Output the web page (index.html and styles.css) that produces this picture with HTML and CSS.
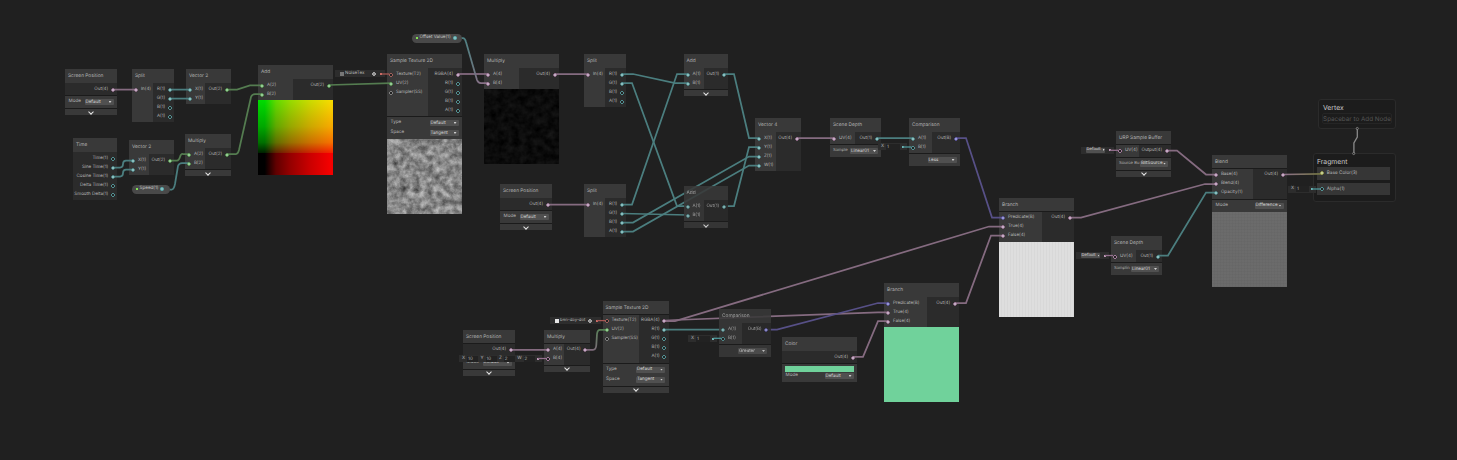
FILE: index.html
```html
<!DOCTYPE html>
<html lang="en">
<head>
<meta charset="utf-8">
<title>Shader Graph</title>
<link rel="stylesheet" href="styles.css">
</head>
<body>
<main class="graph">
<svg class="wires" width="1457" height="460" viewBox="0 0 1457 460">
  <defs>
    <linearGradient id="vec1to4" gradientUnits="userSpaceOnUse" x1="462" y1="38" x2="488" y2="83"><stop offset="0" stop-color="#4e8284"/><stop offset=".6" stop-color="#66777f"/><stop offset="1" stop-color="#8d7089"/></linearGradient>
    <linearGradient id="vec4to2" gradientUnits="userSpaceOnUse" x1="590" y1="350" x2="602" y2="330"><stop offset="0" stop-color="#806a7d"/><stop offset="1" stop-color="#568255"/></linearGradient>
    <linearGradient id="vec4to3" gradientUnits="userSpaceOnUse" x1="1284" y1="174" x2="1322" y2="174"><stop offset="0" stop-color="#8d7089"/><stop offset="1" stop-color="#71753f"/></linearGradient>
  </defs>
  <g class="v4">
    <path d="M113 89.6H136"/><path d="M458 74H488"/><path d="M555 74H588"/><path d="M548 204.7H588"/>
    <path d="M797 138H834"/><path d="M511 349.8H548"/>
    <path d="M1070 217.5H1081L1205 184H1216"/>
    <path d="M665 321H675L989 226.500H1003"/><path d="M665 320.500L675 320L878 312.300H888"/>
    <path d="M853 356.800H863L878 321.200H888"/><path d="M955 303H966L991 235.500H1003"/>
    <path d="M1167 150.500H1177L1206 174.500H1216"/>
  </g>
  <g class="v1">
    <path d="M170 89.600H190"/><path d="M170 98.600H190"/>
    <path d="M113 167.500H120Q123 167.500 123 164T126 160.500H133"/><path d="M113 176.500H120Q123 176.500 123 173T126 169.500H133"/>
    <path d="M165 189.500H172Q174 189 175 184L178 166Q179 163 182 163H189"/>
    <path d="M622 74H633L675 83H688"/><path d="M622 83H632L677 206H688"/>
    <path d="M622 204.500H632L677 74H688"/><path d="M622 213.500L688 215"/>
    <path d="M622 222.500H633L749 156.500H759"/><path d="M622 231.500H633L749 165.500H759"/>
    <path d="M724 74H734L749 138H759"/><path d="M724 206H734L749 147H759"/>
    <path d="M877 138H913"/><path d="M665 329.500H723"/>
    <path d="M1158 255.500H1168L1206 192.500H1216"/>
  </g>
  <g class="v2">
    <path d="M227 89.600H237L250 85.300H262"/><path d="M227 154H236Q238 154 239 150L251 97Q252 94 255 94H262"/>
    <path d="M170 160.500H177Q179 160.500 180 157T183 154H189"/><path d="M329 85L391 83.200"/>
  </g>
  <g class="bool"><path d="M956 138H966L992 217.500H1003"/><path d="M766 329.500H777L878 303H888"/></g>
  <path stroke="url(#vec1to4)" d="M455 38H463Q465 38 466 42L477 80Q478 83 481 83H488"/>
  <path stroke="url(#vec4to2)" d="M586 349.800H593Q596 349.800 596.300 345L597 334Q597.500 329.800 600 329.800H607"/>
  <path stroke="url(#vec4to3)" d="M1283 174.500L1322 173.800"/>
</svg>

<section class="node screen-a"><h2>Screen Position</h2><div class="ports"><div class="out"><p class="p4">Out(4)</p></div></div><div class="ctl"><label>Mode</label><span class="sel">Default</span></div><div class="more"></div></section>
<section class="node split-a"><h2>Split</h2><div class="ports"><div class="in"><p class="p4">In(4)</p></div><div class="out"><p class="p1">R(1)</p><p class="p1">G(1)</p><p class="p1 free">B(1)</p><p class="p1 free">A(1)</p></div></div></section>
<section class="node vec2-a"><h2>Vector 2</h2><div class="ports"><div class="in"><p class="p1">X(1)</p><p class="p1">Y(1)</p></div><div class="out"><p class="p2">Out(2)</p></div></div></section>
<section class="node time"><h2>Time</h2><div class="ports"><div class="out"><p class="p1 free">Time(1)</p><p class="p1">Sine Time(1)</p><p class="p1">Cosine Time(1)</p><p class="p1 free">Delta Time(1)</p><p class="p1 free">Smooth Delta(1)</p></div></div></section>
<section class="node vec2-b"><h2>Vector 2</h2><div class="ports"><div class="in"><p class="p1">X(1)</p><p class="p1">Y(1)</p></div><div class="out"><p class="p2">Out(2)</p></div></div></section>
<section class="node mul-a"><h2>Multiply</h2><div class="ports"><div class="in"><p class="p2">A(2)</p><p class="p2">B(2)</p></div><div class="out"><p class="p2">Out(2)</p></div></div><div class="more"></div></section>
<div class="pill speed"><span>Speed(1)</span></div>
<section class="node add-a"><h2>Add</h2><div class="ports"><div class="in"><p class="p2">A(2)</p><p class="p2">B(2)</p></div><div class="out"><p class="p2">Out(2)</p></div></div><div class="preview uv"></div></section>
<div class="chip noise-tex"><i class="swatch"></i><b class="grow">NoiseTex</b><i class="picker"></i><i class="dot red"></i></div>
<div class="pill offset"><span>Offset Value(1)</span></div>
<section class="node tex-a"><h2>Sample Texture 2D</h2><div class="ports"><div class="in"><p class="pt free">Texture(T2)</p><p class="p2">UV(2)</p><p class="ps free">Sampler(SS)</p></div><div class="out"><p class="p4">RGBA(4)</p><p class="p1 free">R(1)</p><p class="p1 free">G(1)</p><p class="p1 free">B(1)</p><p class="p1 free">A(1)</p></div></div><div class="ctl"><label>Type</label><span class="sel">Default</span></div><div class="ctl joined"><label>Space</label><span class="sel">Tangent</span></div>
<div class="preview"><svg width="75" height="76"><filter id="noise" x="0" y="0" width="100%" height="100%" color-interpolation-filters="sRGB"><feTurbulence type="fractalNoise" baseFrequency=".15" numOctaves="4" seed="8"/><feColorMatrix values=".55 .25 0 0 .13  .55 .25 0 0 .13  .55 .25 0 0 .13  0 0 0 0 1"/></filter><rect width="75" height="76" filter="url(#noise)"/></svg></div></section>
<section class="node mul-b"><h2>Multiply</h2><div class="ports"><div class="in"><p class="p4">A(4)</p><p class="p4">B(4)</p></div><div class="out"><p class="p4">Out(4)</p></div></div>
<div class="preview"><svg width="75" height="76"><filter id="dark-noise" x="0" y="0" width="100%" height="100%" color-interpolation-filters="sRGB"><feTurbulence type="fractalNoise" baseFrequency=".14" numOctaves="3" seed="8"/><feColorMatrix values=".12 0 0 0 -.016  .12 0 0 0 -.016  .12 0 0 0 -.016  0 0 0 0 1"/></filter><rect width="75" height="76" filter="url(#dark-noise)"/></svg></div></section>
<section class="node split-b"><h2>Split</h2><div class="ports"><div class="in"><p class="p4">In(4)</p></div><div class="out"><p class="p1">R(1)</p><p class="p1">G(1)</p><p class="p1 free">B(1)</p><p class="p1 free">A(1)</p></div></div></section>
<section class="node screen-b"><h2>Screen Position</h2><div class="ports"><div class="out"><p class="p4">Out(4)</p></div></div><div class="ctl"><label>Mode</label><span class="sel">Default</span></div><div class="more"></div></section>
<section class="node split-c"><h2>Split</h2><div class="ports"><div class="in"><p class="p4">In(4)</p></div><div class="out"><p class="p1">R(1)</p><p class="p1">G(1)</p><p class="p1">B(1)</p><p class="p1">A(1)</p></div></div></section>
<section class="node add-b"><h2>Add</h2><div class="ports"><div class="in"><p class="p1">A(1)</p><p class="p1">B(1)</p></div><div class="out"><p class="p1">Out(1)</p></div></div><div class="more"></div></section>
<section class="node add-c over"><h2>Add</h2><div class="ports"><div class="in"><p class="p1">A(1)</p><p class="p1">B(1)</p></div><div class="out"><p class="p1">Out(1)</p></div></div><div class="more"></div></section>
<section class="node vec4"><h2>Vector 4</h2><div class="ports"><div class="in"><p class="p1">X(1)</p><p class="p1">Y(1)</p><p class="p1">Z(1)</p><p class="p1">W(1)</p></div><div class="out"><p class="p4">Out(4)</p></div></div></section>
<section class="node depth-a"><h2>Scene Depth</h2><div class="ports"><div class="in"><p class="p4">UV(4)</p></div><div class="out"><p class="p1">Out(1)</p></div></div><div class="ctl tight"><label>Sample</label><span class="sel">Linear01</span></div></section>
<section class="node cmp-a"><h2>Comparison</h2><div class="ports"><div class="in"><p class="p1">A(1)</p><p class="p1 free">B(1)</p></div><div class="out"><p class="pb">Out(B)</p></div></div><div class="ctl"><span class="sel">Less</span></div></section>
<div class="chip value-a"><b>X</b><em>1</em><i class="dot teal"></i></div>
<section class="node branch-a"><h2>Branch</h2><div class="ports"><div class="in"><p class="pb">Predicate(B)</p><p class="p4">True(4)</p><p class="p4">False(4)</p></div><div class="out"><p class="p4">Out(4)</p></div></div><div class="preview weave-light"></div></section>
<section class="node urp"><h2>URP Sample Buffer</h2><div class="ports"><div class="in"><p class="p4 free">UV(4)</p></div><div class="out"><p class="p4">Output(4)</p></div></div><div class="ctl tight"><label>Source Bu</label><span class="sel">BlitSource</span></div><div class="more"></div></section>
<div class="chip default-a"><span class="sel">Default</span><i class="dot pink"></i></div>
<section class="node depth-b"><h2>Scene Depth</h2><div class="ports"><div class="in"><p class="p4 free">UV(4)</p></div><div class="out"><p class="p1">Out(1)</p></div></div><div class="ctl tight"><label>Samplin</label><span class="sel">Linear01</span></div></section>
<div class="chip default-b"><span class="sel">Default</span><i class="dot pink"></i></div>
<section class="node blend"><h2>Blend</h2><div class="ports"><div class="in"><p class="p4">Base(4)</p><p class="p4">Blend(4)</p><p class="p1">Opacity(1)</p></div><div class="out"><p class="p4">Out(4)</p></div></div><div class="ctl"><label>Mode</label><span class="sel">Difference</span></div><div class="preview weave-grey"></div></section>

<section class="node screen-c"><h2>Screen Position</h2><div class="ports"><div class="out"><p class="p4">Out(4)</p></div></div><div class="ctl"><label>Mode</label><span class="sel">Default</span></div><div class="more"></div></section>
<section class="node mul-c"><h2>Multiply</h2><div class="ports"><div class="in"><p class="p4">A(4)</p><p class="p4 free">B(4)</p></div><div class="out"><p class="p4">Out(4)</p></div></div><div class="more"></div></section>
<div class="chip vector"><b>X</b><em>10</em><b>Y</b><em>10</em><b>Z</b><em>2</em><b>W</b><em>2</em><i class="dot pink"></i></div>
<section class="node tex-b"><h2>Sample Texture 2D</h2><div class="ports"><div class="in"><p class="pt free">Texture(T2)</p><p class="p2">UV(2)</p><p class="ps free">Sampler(SS)</p></div><div class="out"><p class="p4">RGBA(4)</p><p class="p1">R(1)</p><p class="p1 free">G(1)</p><p class="p1 free">B(1)</p><p class="p1 free">A(1)</p></div></div><div class="ctl"><label>Type</label><span class="sel">Default</span></div><div class="ctl joined"><label>Space</label><span class="sel">Tangent</span></div><div class="more"></div></section>
<div class="chip clay-tex"><i class="swatch white"></i><b class="grow">ben-day-dot</b><i class="picker"></i><i class="dot red"></i></div>
<section class="node cmp-b over"><h2>Comparison</h2><div class="ports"><div class="in"><p class="p1">A(1)</p><p class="p1 free">B(1)</p></div><div class="out"><p class="pb">Out(B)</p></div></div><div class="ctl"><span class="sel">Greater</span></div></section>
<div class="chip value-b"><b>X</b><em>1</em><i class="dot teal"></i></div>
<section class="node color"><h2>Color</h2><div class="ports"><div class="out"><p class="p4">Out(4)</p></div></div><div class="color-field"></div><div class="ctl joined"><label>Mode</label><span class="sel">Default</span></div></section>
<section class="node branch-b"><h2>Branch</h2><div class="ports"><div class="in"><p class="pb">Predicate(B)</p><p class="p4">True(4)</p><p class="p4">False(4)</p></div><div class="out"><p class="p4">Out(4)</p></div></div><div class="preview green"></div></section>

<section class="stack vertex"><h3>Vertex</h3><div class="hint">Spacebar to Add Node</div></section>
<section class="stack fragment"><h3>Fragment</h3><div class="block"><p class="p3">Base Color(3)</p></div><div class="block"><p class="p1 free">Alpha(1)</p></div></section>
<div class="chip value-c"><b>X</b><em>1</em><i class="dot teal"></i></div>
<svg class="stubs" width="1457" height="460" viewBox="0 0 1457 460">
  <g class="red"><path d="M382 74H389.500"/><path d="M597 320.600H605"/></g>
  <g class="pink"><path d="M538 358.500H546.500"/><path d="M1110 150.300H1118.500"/><path d="M1105 255.500H1113"/></g>
  <g class="teal"><path d="M903 147H911.500"/><path d="M713.500 338.300H721.500"/><path d="M1312 189H1320.500"/></g>
  <path class="stack-link" d="M1357.300 128.500V137L1353.900 143V153.500"/>
  <circle class="stack-end" cx="1357.300" cy="128.500" r="1.100"/><circle class="stack-end" cx="1353.700" cy="153.500" r="1.100"/>
</svg>
</main>
</body>
</html>
```

FILE: styles.css
```css
* { box-sizing: border-box; }
body { margin: 0; background: #202020; font: 400 4.6px/9px Inter, "Liberation Sans", sans-serif; color: #b6b6b6; text-rendering: geometricPrecision; }
h2, h3, p { margin: 0; font-weight: 400; }
.graph { position: relative; width: 1457px; height: 460px; overflow: hidden; background: #202020; }
.wires, .stubs { position: absolute; inset: 0; z-index: 2; fill: none; stroke-width: 1.75; pointer-events: none; }
.v4 { stroke: #856b80; }
.v1 { stroke: #4b7e7f; }
.v2 { stroke: #547c50; }
.bool { stroke: #575087; }
.stubs { z-index: 5; stroke-width: 1.3; }
.stubs .red { stroke: #a65753; }
.stubs .pink { stroke: #94708e; }
.stubs .teal { stroke: #4f9799; }
.stack-link { stroke: #8a8a8a; }
.stack-end { stroke: #999; stroke-width: .7; fill: #202020; }

.node { position: absolute; display: flex; flex-direction: column; background: #1b1b1b; white-space: nowrap; }
.node.over { z-index: 3; opacity: .88; }
.node h2 { height: 13.500px; margin-bottom: .5px; padding-left: 3px; background: #393939; font-size: 4.8px; line-height: 15px; }
.ports { display: flex; background: #2b2b2b; }
.in, .out { padding: 2px 0 1px; }
.in { flex: none; width: var(--in); background: #393939; }
.out { flex: 1; min-width: 0; }
.node p { display: flex; align-items: center; height: 9px; gap: 2.600px; padding: 0 2.300px; font-size: 4.500px; line-height: 10px; }
.out p { flex-direction: row-reverse; }
p::before { content: ""; position: relative; z-index: 3; flex: none; width: 4px; height: 4px; background: radial-gradient(circle, #d4e6e4 .3px, var(--port) 1px 1.300px, transparent 2.100px); }
p.free::before { background: radial-gradient(circle, #222 .8px, var(--port) 1.300px 1.500px, transparent 2.100px); }
.p1 { --port: #58a0a2; }
.p2 { --port: #68b75f; }
.p3 { --port: #b6bb58; }
.p4 { --port: #b584ac; }
.pb { --port: #6c62c4; }
.pt { --port: #b06560; }
.ps { --port: #8a8a8a; }

.ctl { display: flex; align-items: center; justify-content: space-between; height: 12px; margin-top: 1px; padding: 0 3.500px; background: #393939; line-height: 10px; }
.ctl.joined { height: 10px; margin-top: 0; padding-bottom: 2px; }
.ctl.tight { padding: 0 3px; }
.ctl.tight label { font-size: 4.200px; }
.ctl .sel { width: 29px; margin-left: auto; }
.ctl.tight .sel { width: 28px; }
.sel { display: flex; flex: none; align-items: center; justify-content: space-between; height: 6px; padding: 0 2px 0 1px; border-radius: 1px; background: #505050; color: #d4d4d4; font-size: 4.500px; line-height: 7px; }
.sel::after { content: ""; flex: none; width: 3px; height: 2px; background: #d0d0d0; clip-path: polygon(0 0, 100% 0, 50% 100%); }
.more { display: flex; justify-content: center; height: 6px; margin-top: 1px; background: #393939; }
.more::after { content: ""; width: 3px; height: 3px; margin-top: .5px; border: solid #e8e8e8; border-width: 0 1px 1px 0; transform: rotate(45deg); }
.preview { height: 75px; overflow: hidden; }
.preview svg { display: block; }
.uv { background: linear-gradient(90deg, #000 9%, #600000 24%, #930000 42%, #c80000 68%, #f40000 96%); }
.uv::before { content: ""; display: block; height: 53px; background: linear-gradient(90deg, #000 9%, #600000 24%, #930000 42%, #c80000 68%, #f40000 96%), linear-gradient(#00dc00, #00a800 50%, #007000 80%, #002000); background-blend-mode: screen; }
.weave-light { background: repeating-linear-gradient(90deg, #0000 0 2px, #00000007 2px 3px), #dedede; }
.weave-grey { background: repeating-linear-gradient(90deg, #0000 0 2px, #00000006 2px 3px), repeating-linear-gradient(#0000 0 2px, #00000006 2px 3px), #6b6b6b; }
.green { background: #70d29b; }
.color-field { height: 8px; margin-top: 1px; padding: 1.500px 3.500px 0 3px; background: #393939; }
.color-field::before { content: ""; display: block; height: 6px; background: #70d29b; border-bottom: 1px solid #fff; }

.pill { position: absolute; z-index: 3; display: flex; align-items: center; justify-content: space-between; height: 9.500px; padding: 0 5.500px 0 3.500px; border-radius: 5px; background: #494949; color: #c4c4c4; font-size: 4.500px; line-height: 10px; white-space: nowrap; }
.pill::before { content: ""; width: 2px; height: 2px; background: #83df55; }
.pill::after { content: ""; width: 4px; height: 4px; background: radial-gradient(circle, #b4dcdc .3px, #58a0a2 1.100px 1.600px, #58a0a230 2.200px); }

.chip { position: absolute; z-index: 4; display: flex; align-items: center; height: 7px; padding: 0 3px; gap: 2px; background: #2d2d2d; white-space: nowrap; line-height: 8px; font-size: 4.500px; }
.chip b { font-weight: 400; }
.chip em { flex: 1; padding-left: 1px; background: #222; font-style: normal; height: 6px; line-height: 7px; }
.chip .grow { flex: 1; }
.chip .sel { width: 19px; height: 5px; padding: 0 .5px; font-size: 4.200px; line-height: 6px; }
.chip .sel::after { width: 2px; }
.dot { flex: none; width: 2px; height: 2px; margin-left: auto; border-radius: 50%; }
.dot.red { background: #ff8078; }
.dot.teal { background: #84e4e4; }
.dot.pink { background: #efbfe6; }
.swatch { flex: none; width: 4px; height: 4px; background: #777; }
.swatch.white { background: #e6e6e6; }
.picker { flex: none; width: 4px; height: 4px; margin-right: 3px; background: radial-gradient(circle, #bbb .6px, transparent 1px 1.200px, #aaa 1.600px, transparent 2.100px); }

.stack { position: absolute; border: 1px solid #2b2b2b; border-radius: 3px; background: #1c1c1c; padding: 3px; }
.stack h3 { color: #c9c9c9; font-size: 6.800px; line-height: 10px; height: 9px; }
.hint { display: flex; justify-content: center; height: 11px; border: 1px solid #252525; border-radius: 2px; color: #555; font-size: 6.300px; line-height: 10px; white-space: nowrap; }
.block { display: flex; align-items: center; height: 12.500px; margin-bottom: 3px; padding-left: .5px; background: #363636; }
.block p { display: flex; align-items: center; gap: 3px; font-size: 4.700px; line-height: 10px; }
.stack .block p::before { margin-left: 2.300px; }

.screen-a { left: 65px; top: 69px; width: 52px; }
.split-a { left: 132px; top: 69px; width: 42px; --in: 21px; }
.vec2-a { left: 186px; top: 69px; width: 45px; --in: 19px; }
.time { left: 73px; top: 138px; width: 44px; }
.vec2-b { left: 129px; top: 140px; width: 45px; --in: 20px; }
.mul-a { left: 185px; top: 134px; width: 46px; --in: 20px; }
.speed { left: 132px; top: 184.500px; width: 38px; }
.add-a { left: 258px; top: 65px; width: 75px; --in: 35px; }
.noise-tex { left: 335px; top: 70px; width: 50px; padding-left: 5px; gap: 1px; }
.offset { left: 412px; top: 33.500px; width: 50px; }
.tex-a { left: 387px; top: 54px; width: 75px; --in: 41px; }
.mul-b { left: 484px; top: 54px; width: 75px; --in: 35px; }
.split-b { left: 584px; top: 54px; width: 42px; --in: 21px; }
.screen-b { left: 500px; top: 184px; width: 52px; }
.split-c { left: 584px; top: 184px; width: 42px; --in: 21px; }
.add-b { left: 683.500px; top: 54px; width: 44.500px; --in: 20px; }
.add-c { left: 683.500px; top: 186px; width: 44.500px; --in: 20px; }
.vec4 { left: 755px; top: 118px; width: 46px; --in: 21px; }
.depth-a { left: 830px; top: 118px; width: 51px; --in: 25px; }
.value-a { left: 878px; top: 143px; width: 29px; }
.cmp-a { left: 909px; top: 118px; width: 51px; --in: 23px; }
.branch-a { left: 999px; top: 197.500px; width: 75px; --in: 43px; }
.urp { left: 1116px; top: 130.500px; width: 55px; --in: 23px; }
.default-a { left: 1081px; top: 146.500px; width: 33px; padding-left: 5px; }
.depth-b { left: 1111px; top: 236px; width: 51px; --in: 25px; }
.default-b { left: 1076px; top: 252px; width: 33px; padding-left: 5px; }
.blend { left: 1212px; top: 154.500px; width: 75px; --in: 41px; }
.value-c { left: 1288px; top: 185.500px; width: 28px; }
.screen-c { left: 463px; top: 329.500px; width: 52px; }
.mul-c { left: 544px; top: 329.500px; width: 45.500px; --in: 20px; }
.vector { left: 459px; top: 355px; width: 83px; }
.tex-b { left: 602.500px; top: 300.500px; width: 66px; --in: 36px; }
.clay-tex { left: 550px; top: 317px; width: 51px; padding-left: 5px; gap: 1px; font-size: 4.300px; }
.cmp-b { left: 719px; top: 309px; width: 51.500px; --in: 23px; }
.value-b { left: 688px; top: 335px; width: 29px; }
.color { left: 782px; top: 337px; width: 75px; }
.branch-b { left: 884px; top: 283px; width: 75px; --in: 43px; }
.vertex { left: 1318px; top: 99px; width: 78px; height: 30px; }
.vertex h3 { padding-left: 1px; margin-bottom: 1px; }
.fragment { left: 1313px; top: 153px; width: 83px; height: 49px; padding-right: 5px; }
.fragment h3 { margin-bottom: 1px; }
```
